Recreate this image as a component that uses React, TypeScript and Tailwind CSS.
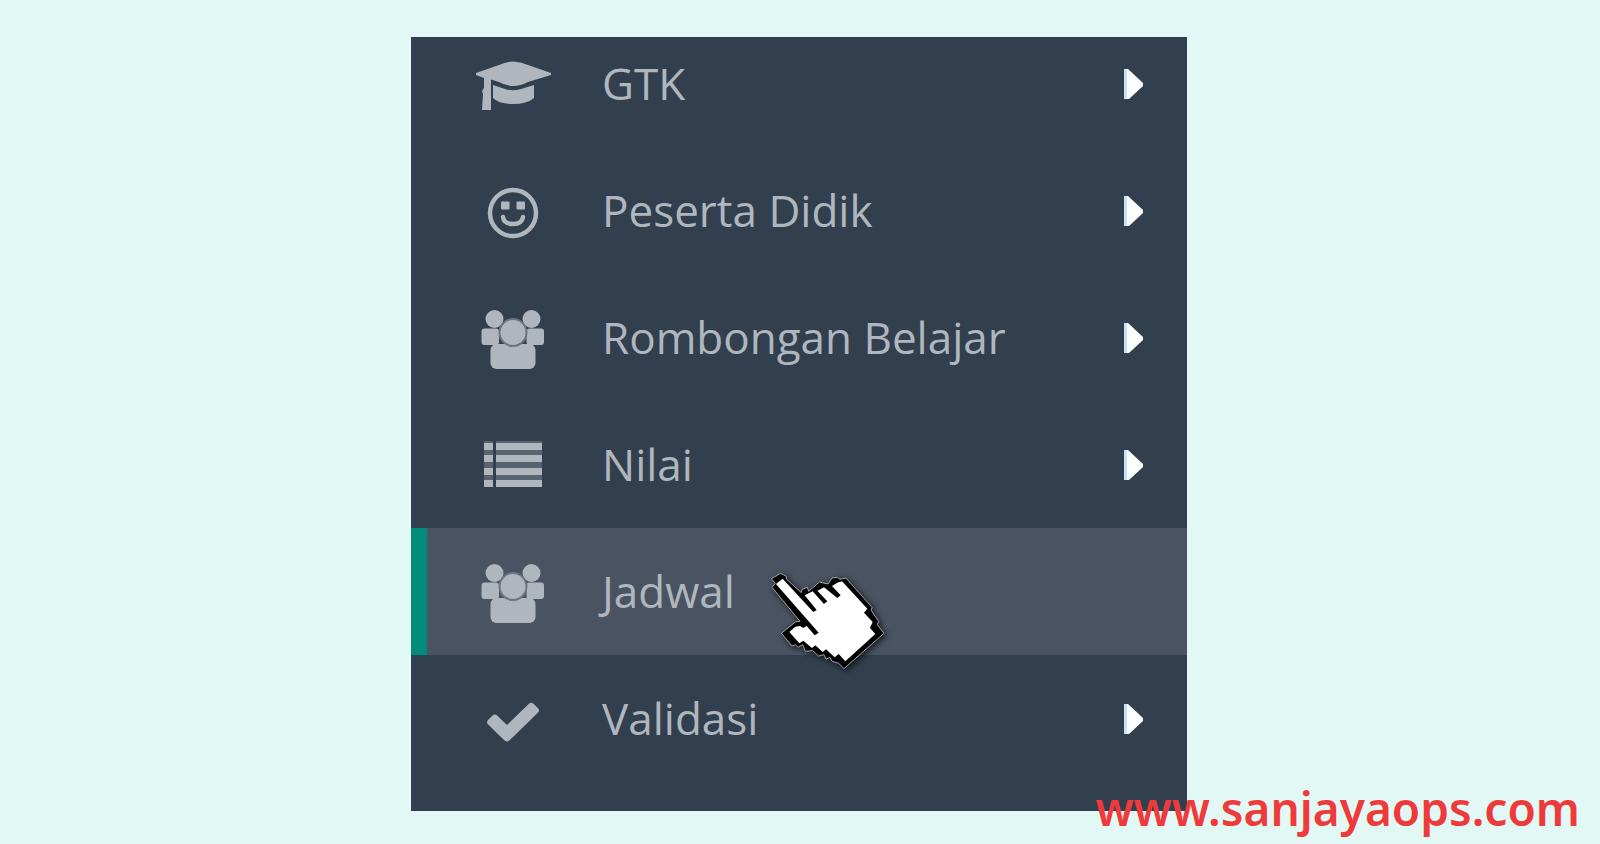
import type { ReactNode } from "react";

const CapIcon = () => (
  <>
    <path d="M4 25 L27 17 Q41 10 56 17 L79 25 V27 L56 34 Q41 42 27 34 L19 31.5 L19 62 L10 62 L11 46 L10 43 L12 40 L12 30 L4 27 Z" />
    <path d="M21 37 L33 41 Q41 43.5 49 41 L62 37 L62 50 Q55 56 41 56 Q27 56 21 50 Z" />
  </>
);

const SmileIcon = () => (
  <>
    <circle cx="41" cy="38" r="23" fill="none" stroke="currentColor" strokeWidth="4.5" />
    <rect x="29" y="26.5" width="8.5" height="8" rx="1" />
    <rect x="44.5" y="26.5" width="8.5" height="8" rx="1" />
    <path d="M31 42 Q32 49 41 49 Q50 49 51 42" fill="none" stroke="currentColor" strokeWidth="4.5" strokeLinecap="round" />
  </>
);

const GroupIcon = () => (
  <>
    <rect x="18.5" y="42" width="45" height="25" rx="6" />
    <rect x="9.5" y="26.5" width="17.5" height="16.5" rx="3" />
    <rect x="54.5" y="26.5" width="17.5" height="16.5" rx="3" />
    <circle cx="22.5" cy="17" r="9" />
    <circle cx="59.5" cy="17" r="9" />
    <circle cx="41" cy="30.5" r="13.5" stroke="#6b7480" strokeWidth="2" />
  </>
);

const ListIcon = () => (
  <>
    <g opacity="0.3">
      <rect x="12" y="12" width="9" height="46" />
      <rect x="24" y="12" width="46" height="46" />
    </g>
    {[14, 26, 39, 51].map((y) => (
      <g key={y}>
        <rect x="12" y={y} width="9" height="7" />
        <rect x="24" y={y} width="46" height="7" />
      </g>
    ))}
  </>
);

const CheckIcon = () => (
  <g transform="translate(11 9) scale(0.0335 0.0325)">
    <path d="M1671 566q0 40-28 68l-724 724-136 136q-28 28-68 28t-68-28l-136-136-362-362q-28-28-28-68t28-68l136-136q28-28 68-28t68 28l294 295 656-657q28-28 68-28t68 28l136 136q28 28 28 68z" />
  </g>
);

const HandPointer = () => (
  <svg
    viewBox="0 0 480 420"
    aria-hidden="true"
    className="pointer-events-none absolute top-[22px] left-[339px] z-10 h-[140px] w-[160px] drop-shadow-[2px_2px_3px_rgba(0,0,0,0.7)]"
  >
    <path
      d="M64 86 L92 70 L108 78 L110 88 L154 128 L156 118 L172 112 L176 124 L208 96 L234 102 L246 84 L262 82 L270 88 L288 84 L366 172 L364 182 L386 214 L382 224 L402 250 L282 356 L266 340 L246 334 L240 322 L228 328 L222 314 L206 318 L188 302 L166 304 L158 284 L144 292 L136 284 L126 288 L94 250 L136 216 L150 214 L66 112 L76 100 Z"
      fill="#000"
      stroke="#a3a6ab"
      strokeWidth="3"
    />
    <path
      d="M78 102 L98 86 L190 186 L200 180 L164 136 L188 124 L222 162 L232 154 L202 122 L222 112 L262 144 L272 136 L246 108 L262 98 L276 94 L352 176 L342 188 L368 216 L360 234 L376 252 L286 334 L266 312 L254 322 L228 298 L218 306 L196 286 L186 294 L160 272 L148 280 L118 246 L136 230 L150 228 L160 234 L170 228 L194 256 L206 248 Z"
      fill="#fff"
    />
  </svg>
);

type Item = { label: string; icon: ReactNode; expandable?: boolean; active?: boolean };

const items: Item[] = [
  { label: "GTK", icon: <CapIcon />, expandable: true },
  { label: "Peserta Didik", icon: <SmileIcon />, expandable: true },
  { label: "Rombongan Belajar", icon: <GroupIcon />, expandable: true },
  { label: "Nilai", icon: <ListIcon />, expandable: true },
  { label: "Jadwal", icon: <GroupIcon />, active: true },
  { label: "Validasi", icon: <CheckIcon />, expandable: true },
];

export default function App() {
  return (
    <main className="relative flex min-h-screen flex-col items-center bg-[#e1f8f4] pt-[37px] pr-0.5 pb-[33px]">
      <nav
        aria-label="Menu"
        className="w-full max-w-[776px] overflow-hidden bg-[#323f4e] pb-[29px] font-['Open_Sans','Noto_Sans',sans-serif] text-[44px] leading-[60px] text-[#b0b6bd]"
      >
        <ul className="-mt-[17px]">
          {items.map((item) => (
            <li key={item.label} className="relative">
              <a
                href="#"
                className={
                  item.active
                    ? "flex h-[127px] items-center border-l-16 border-[#008b7b] bg-[#4a5362] pr-11 pl-[45px]"
                    : "flex h-[127px] items-center border-l-16 border-transparent pr-11 pl-[45px]"
                }
              >
                <svg viewBox="0 0 80 72" fill="currentColor" aria-hidden="true" className="h-[72px] w-20 shrink-0 overflow-visible">
                  {item.icon}
                </svg>
                <span className="ml-[50px] grow pb-0.5">{item.label}</span>
                {item.expandable && (
                  <svg viewBox="0 0 19 30" aria-hidden="true" className="h-[30px] w-[19px] shrink-0">
                    <path d="M0 0 H4 L19 14 V17 L5 30 H0 Z" fill="#fff" />
                    <path d="M0 0 H3 V30 H0 Z" fill="#c5e3fb" />
                  </svg>
                )}
              </a>
              {item.active && <HandPointer />}
            </li>
          ))}
        </ul>
      </nav>
      <a
        href="#"
        className="absolute right-5 bottom-1.5 font-['Noto_Sans',sans-serif] text-[46px] leading-[60px] font-semibold text-[#ee3a3b]"
      >
        www.sanjayaops.com
      </a>
    </main>
  );
}
